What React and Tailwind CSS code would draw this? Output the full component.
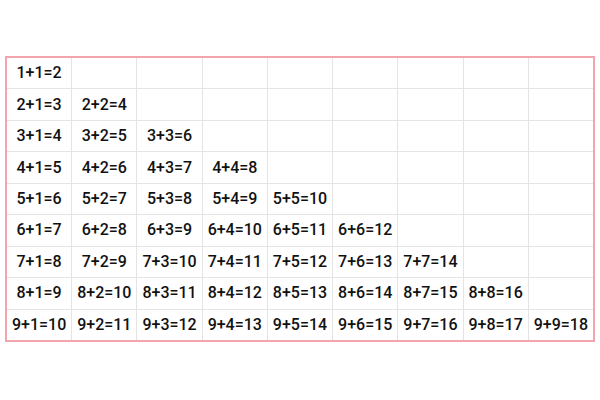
import React from 'react';

// addition table, rows 1..9, row n has n cells
const rows = [1, 2, 3, 4, 5, 6, 7, 8, 9];

function App() {
  return (
    <div className="w-[600px] h-[400px] bg-white pt-[56px] pl-[5px]" style={{ fontFamily: 'Roboto, "Liberation Sans", Arial, sans-serif' }}>
      <div className="w-[590px] h-[286px] border-2 border-[#f2a5ac]">
        <div className="grid grid-cols-9 grid-rows-9 gap-px bg-[#e4e4e4] w-full h-full">
          {rows.map((r) =>
            rows.map((c) => (
              <div key={r + '-' + c} className="bg-white flex items-center justify-center text-[16px] text-[#111111] font-medium">
                {c <= r ? `${r}+${c}=${r + c}` : ''}
              </div>
            ))
          )}
        </div>
      </div>
    </div>
  );
}

export default App;
